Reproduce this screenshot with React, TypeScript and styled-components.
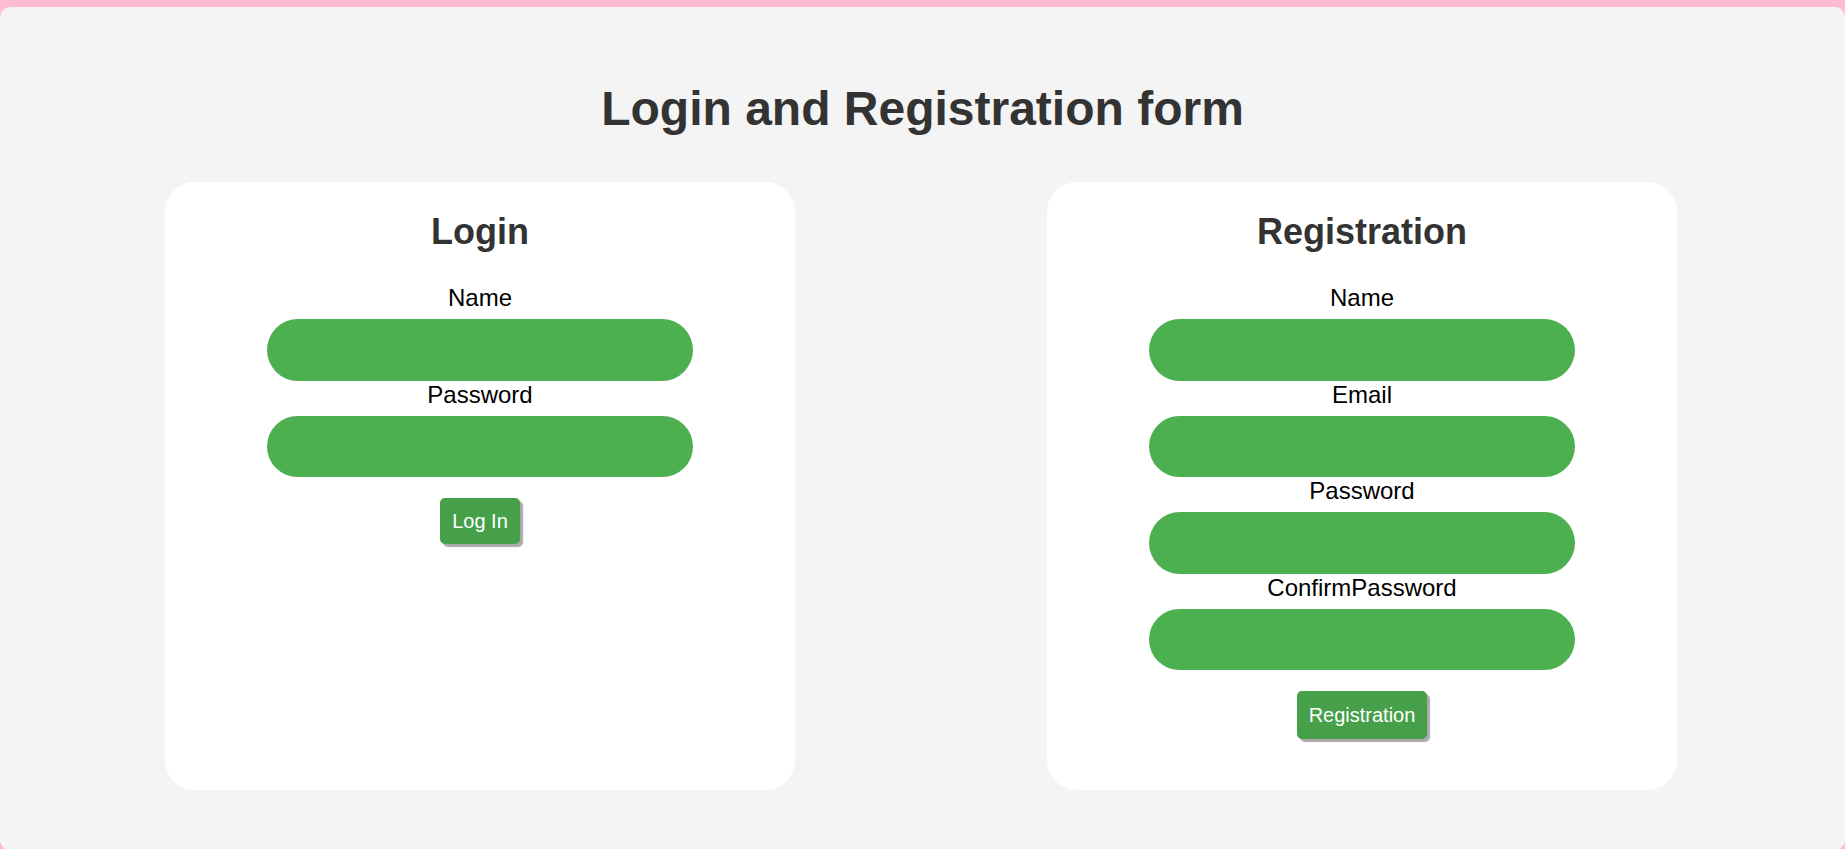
import React from "react";
import styled, { createGlobalStyle } from "styled-components";

const GlobalStyle = createGlobalStyle`
  html, body {
    margin: 0;
    padding: 0;
    background: #ffbbd2;
    font-family: "Liberation Sans", Arial, sans-serif;
  }
  body {
    padding-top: 7px;
    overflow: hidden;
  }
`;

const Page = styled.div`
  box-sizing: border-box;
  height: 843px;
  background: #f4f4f4;
  border-radius: 10px;
  padding-top: 75px;
`;

const Title = styled.h1`
  margin: 0 0 46px;
  font-size: 48px;
  line-height: 54px;
  font-weight: bold;
  color: #333;
  text-align: center;
`;

const Cards = styled.div`
  display: flex;
  justify-content: flex-start;
  padding-left: 165px;
  gap: 252px;
`;

const Card = styled.form`
  box-sizing: border-box;
  width: 630px;
  height: 608px;
  background: #fff;
  border-radius: 30px;
  padding-top: 30px;
  display: flex;
  flex-direction: column;
  align-items: center;
`;

const CardTitle = styled.h2`
  margin: 0 0 32px;
  font-size: 36px;
  line-height: 40px;
  font-weight: bold;
  color: #333;
`;

const Label = styled.label`
  display: block;
  font-size: 24px;
  line-height: 27px;
  color: #000;
  margin-bottom: 8px;
`;

const Field = styled.div`
  display: flex;
  flex-direction: column;
  align-items: center;
`;

const Input = styled.input`
  box-sizing: border-box;
  width: 426px;
  height: 61.5px;
  border: none;
  border-radius: 31px;
  background: #4caf50;
  outline: none;
  padding: 0 20px;
  font-size: 20px;
  color: #fff;
`;

const Button = styled.button<{ $tall?: boolean }>`
  margin-top: 21px;
  height: ${(p) => (p.$tall ? "48px" : "46px")};
  padding: 0 12px;
  border: none;
  border-radius: 5px;
  background: #45a049;
  color: #fff;
  font-family: "Liberation Sans", Arial, sans-serif;
  font-size: 20px;
  box-shadow: 3px 3px 1px #aaa;
  cursor: pointer;
`;

const FormField = ({ label, type = "text" }: { label: string; type?: string }) => (
  <Field>
    <Label>{label}</Label>
    <Input type={type} />
  </Field>
);

export default function App() {
  return (
    <>
      <GlobalStyle />
      <Page>
        <Title>Login and Registration form</Title>
        <Cards>
          <Card onSubmit={(e) => e.preventDefault()}>
            <CardTitle>Login</CardTitle>
            <FormField label="Name" />
            <FormField label="Password" type="password" />
            <Button type="submit">Log In</Button>
          </Card>
          <Card onSubmit={(e) => e.preventDefault()}>
            <CardTitle>Registration</CardTitle>
            <FormField label="Name" />
            <FormField label="Email" type="email" />
            <FormField label="Password" type="password" />
            <FormField label="ConfirmPassword" type="password" />
            <Button type="submit" $tall>
              Registration
            </Button>
          </Card>
        </Cards>
      </Page>
    </>
  );
}
